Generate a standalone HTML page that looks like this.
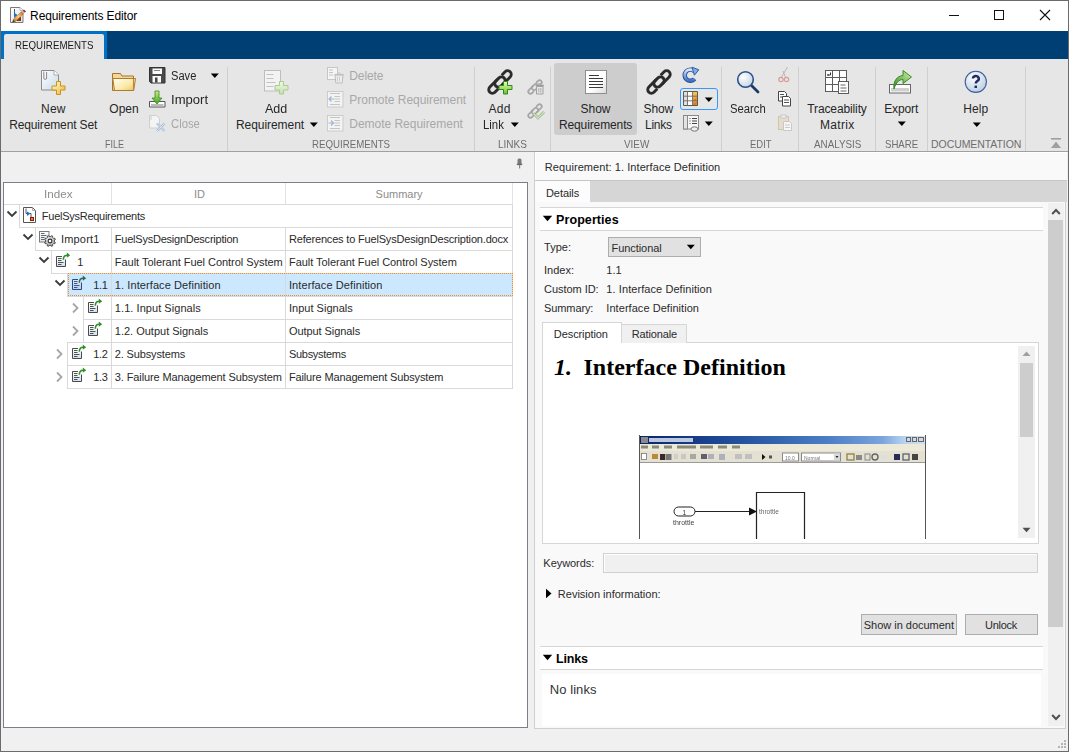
<!DOCTYPE html>
<html><head><meta charset="utf-8">
<style>
html,body{margin:0;padding:0;width:1069px;height:752px;overflow:hidden;background:#f0f0f0;font-family:"Liberation Sans",sans-serif;}
.a{position:absolute;box-sizing:border-box;}
.t{position:absolute;white-space:pre;line-height:1;font-family:"Liberation Sans",sans-serif;}
svg{position:absolute;overflow:visible;}
</style></head><body>
<!-- window frame -->
<div class="a" style="left:0;top:0;width:1069px;height:752px;border:1px solid #6b6b6b;background:#f0f0f0"></div>
<!-- title bar -->
<div class="a" style="left:1px;top:1px;width:1067px;height:30px;background:#fff"></div>
<!-- blue band -->
<div class="a" style="left:1px;top:31px;width:1067px;height:28px;background:#003f73"></div>
<div class="a" style="left:1px;top:31px;width:106px;height:28px;background:#0072c6"></div>
<div class="a" style="left:4px;top:34px;width:100px;height:25px;background:#e6e6e6;border-radius:2px 2px 0 0"></div>
<!-- ribbon -->
<div class="a" style="left:1px;top:59px;width:1067px;height:92px;background:#e6e6e6"></div>
<div class="a" style="left:1px;top:151px;width:1067px;height:1px;background:#a0a0a0"></div>
<!-- group separators -->
<div class="a" style="left:227px;top:67px;width:1px;height:84px;background:#cfcfcf"></div>
<div class="a" style="left:474px;top:67px;width:1px;height:84px;background:#cfcfcf"></div>
<div class="a" style="left:550px;top:67px;width:1px;height:84px;background:#cfcfcf"></div>
<div class="a" style="left:721px;top:67px;width:1px;height:84px;background:#cfcfcf"></div>
<div class="a" style="left:798px;top:67px;width:1px;height:84px;background:#cfcfcf"></div>
<div class="a" style="left:875px;top:67px;width:1px;height:84px;background:#cfcfcf"></div>
<div class="a" style="left:927px;top:67px;width:1px;height:84px;background:#cfcfcf"></div>
<div class="a" style="left:1025px;top:67px;width:1px;height:84px;background:#cfcfcf"></div>
<!-- show requirements highlight -->
<div class="a" style="left:554px;top:63px;width:83px;height:72px;background:#cdcdcd;border-radius:3px"></div>
<!-- view blue outlined button -->
<div class="a" style="left:680px;top:88px;width:38px;height:22px;border:1px solid #3399ff;border-radius:3px"></div>

<!-- title icon -->
<svg style="left:6px;top:4px" width="24" height="22" viewBox="0 0 24 22">
  <defs><linearGradient id="gdoc" x1="0" y1="0" x2="1" y2="1"><stop offset="0" stop-color="#ffffff"/><stop offset="1" stop-color="#d8e4ee"/></linearGradient>
  <linearGradient id="gpen" x1="0" y1="0" x2="1" y2="0"><stop offset="0" stop-color="#c8802a"/><stop offset="0.5" stop-color="#f8d078"/><stop offset="1" stop-color="#c07828"/></linearGradient></defs>
  <path d="M4.5 3.5h9.5l3 3v12h-12.5z" fill="url(#gdoc)" stroke="#7a7a7a" stroke-width="1"/>
  <path d="M14 3.5v3h3" fill="#fff" stroke="#aaa" stroke-width="0.8"/>
  <path d="M8.5 5v4.5" stroke="#555" stroke-width="1"/>
  <path d="M8 8.5l3.5 2.5-3.5 3z" fill="#1f6ad0"/>
  <rect x="10.5" y="13" width="4.5" height="4" fill="#9a2a08"/>
  <g transform="rotate(-43 12.65 12.4)">
    <rect x="6.5" y="10.9" width="11.5" height="3" fill="url(#gpen)" stroke="#a86a22" stroke-width="0.5"/>
    <rect x="18" y="10.9" width="1.8" height="3" fill="#e4a0ae"/>
    <rect x="19.8" y="10.9" width="1.5" height="3" fill="#8a2040"/>
    <path d="M6.5 10.9L3.8 12.4 6.5 13.9z" fill="#444"/>
  </g>
</svg>
<!-- window controls -->
<div class="a" style="left:949px;top:15px;width:10px;height:1px;background:#111"></div>
<div class="a" style="left:994px;top:10px;width:10px;height:10px;border:1px solid #111"></div>
<svg style="left:1039px;top:9px" width="12" height="12" viewBox="0 0 12 12"><path d="M1 1L11 11M11 1L1 11" stroke="#111" stroke-width="1.1"/></svg>

<!-- New Requirement Set -->
<svg style="left:40px;top:69px" width="26" height="26" viewBox="0 0 26 26">
  <defs><linearGradient id="gnd" x1="0" y1="0" x2="1" y2="1"><stop offset="0" stop-color="#ffffff"/><stop offset="1" stop-color="#c9d9e8"/></linearGradient>
  <linearGradient id="gpl" x1="0" y1="0" x2="1" y2="1"><stop offset="0" stop-color="#fffbe0"/><stop offset="1" stop-color="#f2b52a"/></linearGradient></defs>
  <path d="M1.5 1.5h12.5l4.5 4.5v15h-17z" fill="url(#gnd)" stroke="#8a8a8a" stroke-width="1"/>
  <path d="M14 1.5v4.5h4.5" fill="#fff" stroke="#9a9a9a" stroke-width="0.8"/>
  <path d="M3.8 2.5v6.5a1.4 1.4 0 0 0 2.8 0v-6" fill="none" stroke="#888" stroke-width="1"/>
  <path d="M16.5 12.5h4v4.5h4.5v4h-4.5v4.5h-4v-4.5h-4.5v-4h4.5z" fill="url(#gpl)" stroke="#c4961c" stroke-width="1"/>
</svg>
<!-- Open folder -->
<svg style="left:111px;top:72px" width="26" height="20" viewBox="0 0 26 20">
  <defs><linearGradient id="gfo" x1="0" y1="0" x2="1" y2="1"><stop offset="0" stop-color="#fffef6"/><stop offset="0.6" stop-color="#fbe9a8"/><stop offset="1" stop-color="#eec25a"/></linearGradient></defs>
  <path d="M1.5 1.5h8l1.5 2.5h11.5v14.5h-21z" fill="#f2d79a" stroke="#a8742a" stroke-width="1"/>
  <path d="M1.8 6.5h22.7l-1.8 12h-19.2z" fill="url(#gfo)" stroke="#b07a30" stroke-width="1"/>
  <path d="M22.5 7v11" stroke="#c08a3a" stroke-width="1.2"/>
</svg>
<!-- Save floppy -->
<svg style="left:149px;top:67px" width="17" height="17" viewBox="0 0 17 17">
  <path d="M0.5 0.5h15.5v15.5h-14l-1.5-1.5z" fill="#4a4a4a" stroke="#333" stroke-width="1"/>
  <rect x="3.5" y="1.5" width="9.5" height="5.5" fill="#fafafa"/>
  <path d="M5 3.5h6" stroke="#888" stroke-width="1"/>
  <rect x="3.5" y="9" width="8.5" height="6.5" fill="#fafafa"/>
  <rect x="6" y="10.5" width="2.5" height="5" fill="#444"/>
</svg>
<svg style="left:210px;top:73px" width="10" height="6" viewBox="0 0 10 6"><path d="M0.8 0.5h8l-4 4.5z" fill="#000"/></svg>
<!-- Import -->
<svg style="left:149px;top:90px" width="17" height="18" viewBox="0 0 17 18">
  <defs><linearGradient id="gim" x1="0" y1="0" x2="0" y2="1"><stop offset="0" stop-color="#c8f080"/><stop offset="1" stop-color="#3ea020"/></linearGradient></defs>
  <path d="M0.5 11.5h15.5v5.5h-15.5z" fill="#fff" stroke="#555" stroke-width="1"/>
  <rect x="2" y="14" width="12.5" height="2" fill="#bbb"/>
  <path d="M6 1h4v7h3l-5 6-5-6h3z" fill="url(#gim)" stroke="#3b8a1a" stroke-width="0.8"/>
</svg>
<!-- Close disabled -->
<svg style="left:149px;top:115px" width="17" height="17" viewBox="0 0 17 17">
  <path d="M0.5 0.5h7l3 3v9.5h-10z" fill="#f4f4f4" stroke="#cfcfcf" stroke-width="1"/>
  <path d="M2 1v4" stroke="#ccc" stroke-width="1"/>
  <path d="M8 8.5l7.5 7.5M15.5 8.5L8 16" stroke="#a9bdd8" stroke-width="2.4"/>
  <path d="M8 8.5l7.5 7.5M15.5 8.5L8 16" stroke="#dbe5f2" stroke-width="1"/>
</svg>

<!-- Add Requirement (disabled look) -->
<svg style="left:263px;top:69px" width="27" height="26" viewBox="0 0 27 26">
  <rect x="1.5" y="1.5" width="16" height="20.5" fill="#f3f3f3" stroke="#bdbdbd" stroke-width="1"/>
  <path d="M3.5 5.5h7M3.5 9.5h7M3.5 13.5h9M3.5 17.5h7" stroke="#c2c2c2" stroke-width="1"/>
  <defs><linearGradient id="gpg" x1="0" y1="0" x2="0" y2="1"><stop offset="0" stop-color="#eef6e4"/><stop offset="1" stop-color="#c8e0b0"/></linearGradient></defs><path d="M16.5 12.5h4v4h4.5v4.5h-4.5v4h-4v-4h-4.5v-4.5h4.5z" fill="url(#gpg)" stroke="#a9cc8c" stroke-width="1"/>
</svg>
<svg style="left:309px;top:122px" width="10" height="6" viewBox="0 0 10 6"><path d="M0.8 0.5h8l-4 4.5z" fill="#000"/></svg>
<!-- Delete -->
<svg style="left:327px;top:67px" width="17" height="17" viewBox="0 0 17 17">
  <rect x="0.5" y="0.5" width="10" height="12" fill="#f5f5f5" stroke="#c6c6c6"/>
  <path d="M2 3h4M2 5.5h4M2 8h4" stroke="#c4c4c4"/>
  <path d="M8 8h8l-0.8 8h-6.4z" fill="#eee" stroke="#bdbdbd"/>
  <path d="M7.5 7.5h9" stroke="#bdbdbd" stroke-width="1.2"/>
  <path d="M10.5 6h3" stroke="#c6c6c6"/>
  <path d="M10.5 9.5v5M12.5 9.5v5" stroke="#cfcfcf"/>
</svg>
<!-- Promote -->
<svg style="left:327px;top:91px" width="17" height="17" viewBox="0 0 17 17">
  <rect x="0.5" y="0.5" width="15.5" height="15.5" fill="#f3f3f3" stroke="#cbcbcb"/>
  <path d="M3 2.5h10M7.5 5.5h5.5M7.5 8h5.5M7.5 10.5h5.5M3 13.5h10" stroke="#c5c5c5"/>
  <path d="M2 8h5M4.5 5.5L2 8l2.5 2.5" fill="none" stroke="#9fb4d2" stroke-width="1.1"/>
</svg>
<!-- Demote -->
<svg style="left:327px;top:115px" width="17" height="17" viewBox="0 0 17 17">
  <rect x="0.5" y="0.5" width="15.5" height="15.5" fill="#f3f3f3" stroke="#cbcbcb"/>
  <path d="M3 2.5h10M7.5 5.5h5.5M7.5 8h5.5M7.5 10.5h5.5M3 13.5h10" stroke="#c5c5c5"/>
  <path d="M1.5 8h5M4 5.5L6.5 8L4 10.5" fill="none" stroke="#9fb4d2" stroke-width="1.1"/>
</svg>
<!-- Add Link -->
<svg style="left:486px;top:68px" width="28" height="28" viewBox="0 0 28 28">
  <g transform="translate(14 14) rotate(-45)" fill="none" stroke="#2b2b2b" stroke-width="2.9" stroke-linecap="butt">
    <path d="M-6 3.6H-10.8A3.6 3.6 0 0 1 -10.8 -3.6H2.2A3.6 3.6 0 0 1 2.2 3.6H0.2"/>
    <path d="M6 -3.6H10.8A3.6 3.6 0 0 1 10.8 3.6H-2.2A3.6 3.6 0 0 1 -2.2 -3.6H-0.2"/>
  </g>
  <defs><linearGradient id="ggp" x1="0" y1="0" x2="0" y2="1"><stop offset="0" stop-color="#e8ffb0"/><stop offset="1" stop-color="#6cc030"/></linearGradient></defs>
  <path d="M17.5 13.5h4v4h4.5v4h-4.5v4.5h-4v-4.5h-4.5v-4h4.5z" fill="url(#ggp)" stroke="#2e8a1e" stroke-width="1"/>
</svg>
<svg style="left:510px;top:122px" width="10" height="6" viewBox="0 0 10 6"><path d="M0.8 0.5h8l-4 4.5z" fill="#000"/></svg>
<!-- small link delete -->
<svg style="left:527px;top:78px" width="18" height="18" viewBox="0 0 18 18">
  <g transform="translate(8 9) rotate(-45) scale(0.6)" fill="none" stroke="#a4a4a4" stroke-width="2.7">
    <path d="M-6 3.6H-10.8A3.6 3.6 0 0 1 -10.8 -3.6H2.2A3.6 3.6 0 0 1 2.2 3.6H0.2"/>
    <path d="M6 -3.6H10.8A3.6 3.6 0 0 1 10.8 3.6H-2.2A3.6 3.6 0 0 1 -2.2 -3.6H-0.2"/>
  </g>
  <path d="M9.5 8.5h6.5v7.5h-6.5z" fill="#e6e6e6" stroke="#a0a0a0" stroke-width="1"/>
  <path d="M8.5 7.5h8.5" stroke="#a0a0a0" stroke-width="1.4"/>
  <path d="M11 5.8h3.5" stroke="#a8a8a8" stroke-width="1"/>
  <path d="M11.8 10v4.5M13.8 10v4.5" stroke="#b0b0b0" stroke-width="1"/>
</svg>
<!-- small link check -->
<svg style="left:527px;top:102px" width="18" height="18" viewBox="0 0 18 18">
  <g transform="translate(8 9) rotate(-45) scale(0.6)" fill="none" stroke="#a4a4a4" stroke-width="2.7">
    <path d="M-6 3.6H-10.8A3.6 3.6 0 0 1 -10.8 -3.6H2.2A3.6 3.6 0 0 1 2.2 3.6H0.2"/>
    <path d="M6 -3.6H10.8A3.6 3.6 0 0 1 10.8 3.6H-2.2A3.6 3.6 0 0 1 -2.2 -3.6H-0.2"/>
  </g>
  <path d="M6.5 11.5l4.5 4.5 6-6" fill="none" stroke="#9aaa90" stroke-width="2.6"/>
  <path d="M6.5 11.5l4.5 4.5 6-6" fill="none" stroke="#c8ecb0" stroke-width="1.4"/>
</svg>
<!-- Show Requirements doc -->
<svg style="left:584px;top:69px" width="24" height="26" viewBox="0 0 24 26">
  <defs><linearGradient id="gsr" x1="0" y1="0" x2="1" y2="1"><stop offset="0.55" stop-color="#ffffff"/><stop offset="1" stop-color="#dadada"/></linearGradient></defs>
  <rect x="1.5" y="1.5" width="21" height="23" fill="url(#gsr)" stroke="#8e8e8e" stroke-width="1"/>
  <path d="M5 6.5h10M5 9.5h14M5 12.5h14M5 15.5h14M5 18.5h14" stroke="#3a3a3a" stroke-width="1"/>
</svg>
<!-- Show Links chain -->
<svg style="left:645px;top:68px" width="28" height="28" viewBox="0 0 28 28">
  <g transform="translate(14 14) rotate(-45)" fill="none" stroke="#2b2b2b" stroke-width="2.9" stroke-linecap="butt">
    <path d="M-6 3.6H-10.8A3.6 3.6 0 0 1 -10.8 -3.6H2.2A3.6 3.6 0 0 1 2.2 3.6H0.2"/>
    <path d="M6 -3.6H10.8A3.6 3.6 0 0 1 10.8 3.6H-2.2A3.6 3.6 0 0 1 -2.2 -3.6H-0.2"/>
  </g>
</svg>
<!-- Refresh -->
<svg style="left:682px;top:66px" width="18" height="18" viewBox="0 0 18 18">
  <defs><linearGradient id="grf" x1="0" y1="0" x2="0" y2="1"><stop offset="0" stop-color="#d8e8fb"/><stop offset="1" stop-color="#3a72c8"/></linearGradient></defs>
  <path d="M12.2 5.2A5.6 5.6 0 1 0 12.6 12.8" fill="none" stroke="#244f96" stroke-width="4.4"/>
  <path d="M12.2 5.2A5.6 5.6 0 1 0 12.6 12.8" fill="none" stroke="url(#grf)" stroke-width="2.6"/>
  <path d="M10 1.2l6.8 2.6-4.4 5.4z" fill="#7fb0ee" stroke="#244f96" stroke-width="0.9"/>
</svg>
<!-- table icon -->
<svg style="left:683px;top:91px" width="16" height="16" viewBox="0 0 16 16">
  <defs><linearGradient id="gor" x1="0" y1="0" x2="0" y2="1"><stop offset="0" stop-color="#fbc850"/><stop offset="1" stop-color="#e8801a"/></linearGradient></defs>
  <rect x="0.5" y="0.5" width="14" height="14" fill="#fff"/>
  <rect x="1" y="1" width="4" height="13" fill="#e0e0e0"/>
  <rect x="9.5" y="0.5" width="5" height="14" fill="url(#gor)"/>
  <path d="M0.5 0.5h14v14h-14z" fill="none" stroke="#5a5a5a"/>
  <path d="M0.5 5.2h14M0.5 9.8h14M4.5 0.5v14M9.5 0.5v14" stroke="#6a6a6a" stroke-width="0.9"/>
  <path d="M10.8 8l1.2 1 1.6-2M10.8 12.5l1.2 1 1.6-2" fill="none" stroke="#c8601a" stroke-width="0.7"/>
</svg>
<svg style="left:704px;top:97px" width="10" height="6" viewBox="0 0 10 6"><path d="M0.8 0.5h8l-4 4.5z" fill="#000"/></svg>
<!-- third icon -->
<svg style="left:682px;top:114px" width="18" height="18" viewBox="0 0 18 18">
  <rect x="1.5" y="1.5" width="15" height="13.5" fill="#f7f7f7" stroke="#8a8a8a"/>
  <rect x="1.5" y="1.5" width="4" height="13.5" fill="#e4e4e4" stroke="#8a8a8a"/>
  <path d="M7.5 4.5h1M10 4.5h5M7.5 7h1M10 7h5M7.5 9.5h1M10 9.5h5" stroke="#444"/>
  <ellipse cx="12.5" cy="15" rx="3.5" ry="2.2" fill="#eee" stroke="#777"/>
</svg>
<svg style="left:704px;top:121px" width="10" height="6" viewBox="0 0 10 6"><path d="M0.8 0.5h8l-4 4.5z" fill="#000"/></svg>
<!-- Search -->
<svg style="left:735px;top:69px" width="26" height="26" viewBox="0 0 26 26">
  <defs><radialGradient id="gms" cx="0.35" cy="0.35" r="0.7"><stop offset="0" stop-color="#ffffff"/><stop offset="1" stop-color="#c6d6e6"/></radialGradient></defs>
  <path d="M16 16l7 7" stroke="#1b3b66" stroke-width="2.8" stroke-linecap="round"/>
  <circle cx="10.5" cy="10.5" r="7.8" fill="url(#gms)" stroke="#2e5287" stroke-width="1.6"/>
</svg>
<!-- scissors disabled -->
<svg style="left:778px;top:66px" width="12" height="18" viewBox="0 0 12 18">
  <path d="M3.5 11L9.5 1M7.5 11L5 5" stroke="#b9b9b9" stroke-width="1"/>
  <circle cx="3" cy="13.5" r="2.2" fill="none" stroke="#e09898" stroke-width="1.2"/>
  <circle cx="8.5" cy="13.5" r="2.2" fill="none" stroke="#e09898" stroke-width="1.2"/>
</svg>
<!-- copy -->
<svg style="left:778px;top:90px" width="14" height="17" viewBox="0 0 14 17">
  <path d="M0.5 1.5h6l2 2v7.5h-8z" fill="#fff" stroke="#444"/>
  <path d="M2 4.5h4M2 7h4" stroke="#555"/>
  <path d="M4.5 6.5h6l2 2v7.5h-8z" fill="#fff" stroke="#444"/>
  <path d="M6 10h5M6 12.5h5" stroke="#555"/>
</svg>
<!-- paste disabled -->
<svg style="left:777px;top:114px" width="16" height="18" viewBox="0 0 16 18">
  <rect x="1.5" y="2.5" width="10" height="13" fill="#e6dccb" stroke="#cfc4b0"/>
  <rect x="4" y="1" width="5" height="3" fill="#eee" stroke="#c9c9c9"/>
  <path d="M6.5 7.5h6l2 2v7h-8z" fill="#f6f6f6" stroke="#c8c8c8"/>
  <path d="M8 11h5M8 13.5h5" stroke="#cacaca"/>
</svg>
<!-- Traceability -->
<svg style="left:824px;top:69px" width="27" height="27" viewBox="0 0 27 27">
  <rect x="1.5" y="1.5" width="21" height="21" fill="#fff" stroke="#5c5c5c" stroke-width="1"/>
  <path d="M8.5 1.5v21M15.5 1.5v21M1.5 8.5h21M1.5 15.5h21" stroke="#5c5c5c" stroke-width="1"/>
  <path d="M6.5 3.5v2.5h-3M4.5 5l-1 1 1 1" fill="none" stroke="#333" stroke-width="1"/>
  <rect x="14.5" y="12.5" width="10" height="12" fill="#fff" stroke="#5c5c5c"/>
  <path d="M16.5 16h5M16.5 19h6M16.5 22h6" stroke="#666"/>
</svg>
<!-- Export -->
<svg style="left:887px;top:68px" width="26" height="27" viewBox="0 0 26 27">
  <defs><linearGradient id="gex" x1="0" y1="1" x2="1" y2="0"><stop offset="0" stop-color="#2f8a1e"/><stop offset="1" stop-color="#d6f4a8"/></linearGradient></defs>
  <rect x="2.5" y="16.5" width="21" height="8.5" fill="#fff" stroke="#666"/>
  <rect x="4" y="20" width="18" height="3.5" fill="#cfcfcf"/>
  <path d="M7 21C6 13 10 8 16 7.5V2.5l8.5 6.5-8.5 6.5v-4c-4 0-7 3-9 9.5z" fill="url(#gex)" stroke="#3a8a28" stroke-width="1"/>
</svg>
<svg style="left:897px;top:121px" width="10" height="6" viewBox="0 0 10 6"><path d="M0.8 0.5h8l-4 4.5z" fill="#000"/></svg>
<!-- Help -->
<svg style="left:963px;top:69px" width="26" height="26" viewBox="0 0 26 26">
  <defs><radialGradient id="ghp" cx="0.4" cy="0.3" r="0.75"><stop offset="0" stop-color="#ffffff"/><stop offset="1" stop-color="#b9cbe2"/></radialGradient></defs>
  <circle cx="12.8" cy="12.8" r="10.6" fill="url(#ghp)" stroke="#3a5f9c" stroke-width="1.1"/>
  <path d="M10 9.6a2.9 2.7 0 1 1 4.3 2.4c-1 0.7-1.5 1.1-1.5 2.6" fill="none" stroke="#1f3060" stroke-width="2.5"/>
  <rect x="11.5" y="16.6" width="2.5" height="2.4" fill="#1f3060"/>
</svg>
<svg style="left:972px;top:122px" width="10" height="6" viewBox="0 0 10 6"><path d="M0.8 0.5h8l-4 4.5z" fill="#000"/></svg>
<!-- collapse ribbon -->
<svg style="left:1050px;top:137px" width="12" height="12" viewBox="0 0 12 12">
  <rect x="1" y="1" width="10" height="1.6" fill="#a0a0a0"/>
  <path d="M1 11h10l-5-6.5z" fill="#a0a0a0"/>
</svg>

<!-- ===== left tree panel ===== -->
<div class="a" style="left:3px;top:182px;width:525px;height:546px;border:1px solid #7a7f88;background:#fff"></div>

<!-- ===== right panel ===== -->
<div class="a" style="left:534px;top:152px;width:532px;height:577px;border:1px solid #cfcfcf;border-top:none;background:#f9f9f9"></div>

<!-- tree header -->
<div class="a" style="left:4px;top:204px;width:508px;height:1px;background:#dadada"></div>
<div class="a" style="left:111px;top:183px;width:1px;height:21px;background:#e3e3e3"></div>
<div class="a" style="left:285px;top:183px;width:1px;height:21px;background:#e3e3e3"></div>
<div class="a" style="left:512px;top:183px;width:1px;height:21px;background:#e3e3e3"></div>
<!-- rows -->
<div class="a" style="left:19px;top:204px;width:494px;height:24px;border:1px solid #d9d9d9"></div>
<div class="a" style="left:35px;top:227px;width:478px;height:24px;border:1px solid #d9d9d9"></div>
<div class="a" style="left:51px;top:250px;width:462px;height:24px;border:1px solid #d9d9d9"></div>
<div class="a" style="left:67px;top:273px;width:446px;height:24px;border:1px solid #d9d9d9;background:#cce8ff"></div>
<div class="a" style="left:83px;top:296px;width:430px;height:24px;border:1px solid #d9d9d9"></div>
<div class="a" style="left:83px;top:319px;width:430px;height:24px;border:1px solid #d9d9d9"></div>
<div class="a" style="left:67px;top:342px;width:446px;height:24px;border:1px solid #d9d9d9"></div>
<div class="a" style="left:67px;top:365px;width:446px;height:24px;border:1px solid #d9d9d9"></div>
<!-- column lines in rows 1..7 -->
<div class="a" style="left:111px;top:227px;width:1px;height:161px;background:#d9d9d9"></div>
<div class="a" style="left:285px;top:227px;width:1px;height:161px;background:#d9d9d9"></div>
<!-- selection focus dotted -->
<div class="a" style="left:68px;top:273px;width:445px;height:23px;border:1px dotted #f08a24"></div>
<!-- chevrons -->
<svg style="left:6px;top:210px" width="12" height="9" viewBox="0 0 12 9"><path d="M1.5 1.5L6 6l4.5-4.5" fill="none" stroke="#3a3a3a" stroke-width="1.8"/></svg>
<svg style="left:22px;top:233px" width="12" height="9" viewBox="0 0 12 9"><path d="M1.5 1.5L6 6l4.5-4.5" fill="none" stroke="#3a3a3a" stroke-width="1.8"/></svg>
<svg style="left:38px;top:256px" width="12" height="9" viewBox="0 0 12 9"><path d="M1.5 1.5L6 6l4.5-4.5" fill="none" stroke="#3a3a3a" stroke-width="1.8"/></svg>
<svg style="left:54px;top:279px" width="12" height="9" viewBox="0 0 12 9"><path d="M1.5 1.5L6 6l4.5-4.5" fill="none" stroke="#3a3a3a" stroke-width="1.8"/></svg>
<svg style="left:71px;top:302px" width="9" height="12" viewBox="0 0 9 12"><path d="M2 1.5l4.5 4.5L2 10.5" fill="none" stroke="#a6a6a6" stroke-width="1.8"/></svg>
<svg style="left:71px;top:325px" width="9" height="12" viewBox="0 0 9 12"><path d="M2 1.5l4.5 4.5L2 10.5" fill="none" stroke="#a6a6a6" stroke-width="1.8"/></svg>
<svg style="left:55px;top:348px" width="9" height="12" viewBox="0 0 9 12"><path d="M2 1.5l4.5 4.5L2 10.5" fill="none" stroke="#a6a6a6" stroke-width="1.8"/></svg>
<svg style="left:55px;top:371px" width="9" height="12" viewBox="0 0 9 12"><path d="M2 1.5l4.5 4.5L2 10.5" fill="none" stroke="#a6a6a6" stroke-width="1.8"/></svg>
<!-- FuelSys icon -->
<svg style="left:22px;top:206px" width="16" height="18" viewBox="0 0 16 18">
  <path d="M1.5 1.5h9l3 3v12h-12z" fill="#fff" stroke="#555" stroke-width="1"/>
  <path d="M10.5 1.5v3h3" fill="none" stroke="#999" stroke-width="0.8"/>
  <path d="M4 2.5v5h5v4" fill="none" stroke="#444" stroke-width="0.9"/>
  <path d="M5 5.5l3.5 2-3.5 2.5z" fill="#1f6fd0"/>
  <rect x="8" y="11" width="4" height="4" fill="#8a1a08"/>
  <rect x="9" y="12" width="2" height="2" fill="#f07a20"/>
</svg>
<!-- Import icon -->
<svg style="left:38px;top:230px" width="18" height="18" viewBox="0 0 18 18">
  <defs><linearGradient id="gimp" x1="0" y1="0" x2="0" y2="1"><stop offset="0" stop-color="#ffffff"/><stop offset="1" stop-color="#d6e6f4"/></linearGradient>
  <radialGradient id="ggear" cx="0.4" cy="0.35" r="0.7"><stop offset="0" stop-color="#f4f4f4"/><stop offset="1" stop-color="#9a9a9a"/></radialGradient></defs>
  <rect x="1.5" y="1.5" width="9.5" height="10.5" fill="url(#gimp)" stroke="#7a7a7a" stroke-width="1"/>
  <path d="M3 3.5h3.5M3 5.5h5.5M3 7.5h3.5M3 9.5h3" stroke="#6a6a6a" stroke-width="1"/>
  <g transform="translate(12 11)">
    <path d="M4.42 0.84 L5.32 1.41 L4.76 2.76 L3.72 2.53 L2.53 3.72 L2.76 4.76 L1.41 5.32 L0.84 4.42 L-0.84 4.42 L-1.41 5.32 L-2.76 4.76 L-2.53 3.72 L-3.72 2.53 L-4.76 2.76 L-5.32 1.41 L-4.42 0.84 L-4.42 -0.84 L-5.32 -1.41 L-4.76 -2.76 L-3.72 -2.53 L-2.53 -3.72 L-2.76 -4.76 L-1.41 -5.32 L-0.84 -4.42 L0.84 -4.42 L1.41 -5.32 L2.76 -4.76 L2.53 -3.72 L3.72 -2.53 L4.76 -2.76 L5.32 -1.41 L4.42 -0.84Z" fill="url(#ggear)" stroke="#444" stroke-width="1"/>
    <circle cx="0" cy="0" r="1.9" fill="#fff" stroke="#2e2e2e" stroke-width="1.1"/>
  </g>
</svg>
<svg style="left:55px;top:252px" width="16" height="16" viewBox="0 0 16 16">
  <defs><linearGradient id="grq55252" x1="0" y1="0" x2="0" y2="1"><stop offset="0" stop-color="#ffffff"/><stop offset="1" stop-color="#cfe0f0"/></linearGradient></defs>
  <rect x="1.5" y="4.5" width="9" height="10" fill="url(#grq55252)"/>
  <path d="M7 4.5H1.5v10h9V7.5" fill="none" stroke="#4a4a4a" stroke-width="1"/>
  <path d="M3 6.5h3.5M3 8.5h3.5M3 10.5h5.5M3 12.5h3.5" stroke="#505050" stroke-width="1"/>
  <path d="M8.3 7.8C8.3 4.8 9.8 3.2 12.2 3.2" fill="none" stroke="#2f8f2a" stroke-width="1.5"/>
  <path d="M11.8 0.6l3.4 2.6-3.4 2.6z" fill="#2f8f2a"/>
</svg>
<svg style="left:71px;top:275px" width="16" height="16" viewBox="0 0 16 16">
  <defs><linearGradient id="grq71275" x1="0" y1="0" x2="0" y2="1"><stop offset="0" stop-color="#dce8f6"/><stop offset="1" stop-color="#b8d0ec"/></linearGradient></defs>
  <rect x="1.5" y="4.5" width="9" height="10" fill="url(#grq71275)"/>
  <path d="M7 4.5H1.5v10h9V7.5" fill="none" stroke="#2a4a7e" stroke-width="1"/>
  <path d="M3 6.5h3.5M3 8.5h3.5M3 10.5h5.5M3 12.5h3.5" stroke="#3a5a8e" stroke-width="1"/>
  <path d="M8.3 7.8C8.3 4.8 9.8 3.2 12.2 3.2" fill="none" stroke="#2f6a5a" stroke-width="1.5"/>
  <path d="M11.8 0.6l3.4 2.6-3.4 2.6z" fill="#2f6a5a"/>
</svg>
<svg style="left:87px;top:298px" width="16" height="16" viewBox="0 0 16 16">
  <defs><linearGradient id="grq87298" x1="0" y1="0" x2="0" y2="1"><stop offset="0" stop-color="#ffffff"/><stop offset="1" stop-color="#cfe0f0"/></linearGradient></defs>
  <rect x="1.5" y="4.5" width="9" height="10" fill="url(#grq87298)"/>
  <path d="M7 4.5H1.5v10h9V7.5" fill="none" stroke="#4a4a4a" stroke-width="1"/>
  <path d="M3 6.5h3.5M3 8.5h3.5M3 10.5h5.5M3 12.5h3.5" stroke="#505050" stroke-width="1"/>
  <path d="M8.3 7.8C8.3 4.8 9.8 3.2 12.2 3.2" fill="none" stroke="#2f8f2a" stroke-width="1.5"/>
  <path d="M11.8 0.6l3.4 2.6-3.4 2.6z" fill="#2f8f2a"/>
</svg>
<svg style="left:87px;top:321px" width="16" height="16" viewBox="0 0 16 16">
  <defs><linearGradient id="grq87321" x1="0" y1="0" x2="0" y2="1"><stop offset="0" stop-color="#ffffff"/><stop offset="1" stop-color="#cfe0f0"/></linearGradient></defs>
  <rect x="1.5" y="4.5" width="9" height="10" fill="url(#grq87321)"/>
  <path d="M7 4.5H1.5v10h9V7.5" fill="none" stroke="#4a4a4a" stroke-width="1"/>
  <path d="M3 6.5h3.5M3 8.5h3.5M3 10.5h5.5M3 12.5h3.5" stroke="#505050" stroke-width="1"/>
  <path d="M8.3 7.8C8.3 4.8 9.8 3.2 12.2 3.2" fill="none" stroke="#2f8f2a" stroke-width="1.5"/>
  <path d="M11.8 0.6l3.4 2.6-3.4 2.6z" fill="#2f8f2a"/>
</svg>
<svg style="left:71px;top:344px" width="16" height="16" viewBox="0 0 16 16">
  <defs><linearGradient id="grq71344" x1="0" y1="0" x2="0" y2="1"><stop offset="0" stop-color="#ffffff"/><stop offset="1" stop-color="#cfe0f0"/></linearGradient></defs>
  <rect x="1.5" y="4.5" width="9" height="10" fill="url(#grq71344)"/>
  <path d="M7 4.5H1.5v10h9V7.5" fill="none" stroke="#4a4a4a" stroke-width="1"/>
  <path d="M3 6.5h3.5M3 8.5h3.5M3 10.5h5.5M3 12.5h3.5" stroke="#505050" stroke-width="1"/>
  <path d="M8.3 7.8C8.3 4.8 9.8 3.2 12.2 3.2" fill="none" stroke="#2f8f2a" stroke-width="1.5"/>
  <path d="M11.8 0.6l3.4 2.6-3.4 2.6z" fill="#2f8f2a"/>
</svg>
<svg style="left:71px;top:367px" width="16" height="16" viewBox="0 0 16 16">
  <defs><linearGradient id="grq71367" x1="0" y1="0" x2="0" y2="1"><stop offset="0" stop-color="#ffffff"/><stop offset="1" stop-color="#cfe0f0"/></linearGradient></defs>
  <rect x="1.5" y="4.5" width="9" height="10" fill="url(#grq71367)"/>
  <path d="M7 4.5H1.5v10h9V7.5" fill="none" stroke="#4a4a4a" stroke-width="1"/>
  <path d="M3 6.5h3.5M3 8.5h3.5M3 10.5h5.5M3 12.5h3.5" stroke="#505050" stroke-width="1"/>
  <path d="M8.3 7.8C8.3 4.8 9.8 3.2 12.2 3.2" fill="none" stroke="#2f8f2a" stroke-width="1.5"/>
  <path d="M11.8 0.6l3.4 2.6-3.4 2.6z" fill="#2f8f2a"/>
</svg>
<!-- header box -->
<div class="a" style="left:535px;top:152px;width:532px;height:28px;background:#f9f9f9;border-top:1px solid #fff;border-left:1px solid #fff"></div>
<div class="a" style="left:535px;top:180px;width:532px;height:1px;background:#c6c6c6"></div>
<!-- tab strip -->
<div class="a" style="left:535px;top:181px;width:532px;height:21px;background:#d6d6d6"></div>
<div class="a" style="left:535px;top:181px;width:55px;height:21px;background:#fcfcfc"></div>
<!-- Properties header -->
<div class="a" style="left:540px;top:207px;width:503px;height:24px;background:#fff;border-top:1px solid #d6d6d6;border-bottom:1px solid #d6d6d6"></div>
<svg style="left:542px;top:215px" width="11" height="7" viewBox="0 0 11 7"><path d="M0.8 0.8h9.4l-4.7 5.4z" fill="#000"/></svg>
<!-- outer scrollbar -->
<div class="a" style="left:1048px;top:203px;width:16px;height:523px;background:#f0f0f0"></div>
<div class="a" style="left:1048px;top:220px;width:15px;height:407px;background:#cdcdcd"></div>
<svg style="left:1051px;top:207px" width="10" height="9" viewBox="0 0 10 9"><path d="M1.2 7L5 3l3.8 4" fill="none" stroke="#505050" stroke-width="2"/></svg>
<svg style="left:1051px;top:713px" width="10" height="9" viewBox="0 0 10 9"><path d="M1.2 2L5 6l3.8-4" fill="none" stroke="#505050" stroke-width="2"/></svg>
<!-- Type dropdown -->
<div class="a" style="left:608px;top:237px;width:93px;height:20px;background:#e1e1e1;border:1px solid #adadad"></div>
<svg style="left:686px;top:244px" width="10" height="6" viewBox="0 0 10 6"><path d="M0.8 0.8h8l-4 4.4z" fill="#000"/></svg>
<!-- description tabs -->
<div class="a" style="left:542px;top:342px;width:497px;height:202px;background:#fff;border:1px solid #d6d6d6"></div>
<div class="a" style="left:621px;top:324px;width:66px;height:19px;background:#f0f0f0;border:1px solid #d6d6d6;border-bottom:none"></div>
<div class="a" style="left:542px;top:322px;width:80px;height:21px;background:#fff;border:1px solid #d6d6d6;border-bottom:none"></div>
<!-- inner scrollbar -->
<div class="a" style="left:1018px;top:346px;width:17px;height:192px;background:#f0f0f0"></div>
<div class="a" style="left:1020px;top:363px;width:13px;height:74px;background:#cdcdcd"></div>
<svg style="left:1022px;top:351px" width="9" height="6" viewBox="0 0 9 6"><path d="M0.5 5h8l-4-4.5z" fill="#a0a0a0"/></svg>
<svg style="left:1022px;top:527px" width="9" height="6" viewBox="0 0 9 6"><path d="M0.5 0.8h8l-4 4.5z" fill="#505050"/></svg>
<!-- simulink image -->
<div class="a" style="left:639px;top:435px;width:287px;height:104px;background:#fff;border-left:1px solid #555;border-right:1px solid #555;overflow:hidden;filter:blur(0.35px)">
  <div class="a" style="left:0;top:1px;width:285px;height:8px;background:linear-gradient(90deg,#0a246a,#1e4a98 30%,#4a7cc4 65%,#7aa4dc 85%,#b8d4f2 93%,#d0e0f4)"></div>
  <div class="a" style="left:1px;top:2px;width:7px;height:6px;background:#8a8a8a"></div>
  <div class="a" style="left:9px;top:3px;width:44px;height:4px;background:#e8eefa;opacity:0.8"></div>
  <div class="a" style="left:266px;top:2px;width:5px;height:5px;background:#d8d8d8;border:1px solid #666"></div>
  <div class="a" style="left:272px;top:2px;width:5px;height:5px;background:#d8d8d8;border:1px solid #666"></div>
  <div class="a" style="left:278px;top:2px;width:6px;height:5px;background:#d8d8d8;border:1px solid #666"></div>
  <div class="a" style="left:0;top:9px;width:285px;height:7px;background:#ece9d8"></div>
  <div class="a" style="left:0;top:16px;width:285px;height:12px;background:#e4e1d2;border-bottom:1px solid #9a9a9a"></div>
</div>
<svg style="left:639px;top:443px;filter:blur(0.45px)" width="287" height="20" viewBox="0 0 287 20">
  <g fill="#8a8a7a">
    <rect x="2" y="2.5" width="7" height="3"/><rect x="13" y="2.5" width="7" height="3"/><rect x="25" y="2.5" width="8" height="3"/><rect x="38" y="2.5" width="19" height="3"/><rect x="61" y="2.5" width="13" height="3"/><rect x="79" y="2.5" width="9" height="3"/><rect x="93" y="2.5" width="8" height="3"/>
  </g>
  <g>
    <rect x="2.5" y="10.5" width="5" height="6" fill="#fff" stroke="#777" stroke-width="0.8"/>
    <rect x="13" y="11" width="6" height="5" fill="#b88a3a"/><rect x="21" y="11" width="5" height="6" fill="#3a2a2a"/><rect x="26.5" y="11" width="6" height="6" fill="#777"/>
    <rect x="35" y="11" width="4" height="5" fill="#cfcfc8"/><rect x="42" y="11" width="5" height="5" fill="#c8c8c0"/><rect x="51" y="11" width="6" height="5" fill="#a8a8a0"/>
    <rect x="62" y="11" width="6" height="5" fill="#606070"/><rect x="69" y="11" width="6" height="5" fill="#b0b0b8"/><rect x="80" y="11" width="6" height="6" fill="#b0b0b8"/>
    <rect x="96" y="11" width="7" height="5" fill="#c0c0c0"/><rect x="106" y="11" width="7" height="5" fill="#c0c0c0"/>
    <path d="M123 11l3.5 3-3.5 3z" fill="#111"/><rect x="130" y="12.5" width="3" height="3" fill="#555"/>
    <rect x="143.5" y="10" width="16" height="8" fill="#fff" stroke="#8a8a8a" stroke-width="1"/>
    <rect x="162.5" y="10" width="39" height="8" fill="#fff" stroke="#8a8a8a" stroke-width="1"/>
    <rect x="195" y="10.5" width="6" height="7" fill="#d8d8d8"/>
    <path d="M196.5 13h3l-1.5 2z" fill="#222"/>
    <text x="146" y="16.5" font-family="Liberation Sans" font-size="5" fill="#777">10.0</text>
    <text x="165" y="16.5" font-family="Liberation Sans" font-size="5" fill="#777">Normal</text>
    <rect x="208" y="11" width="7" height="6" fill="none" stroke="#8a7a3a" stroke-width="1.2"/><rect x="217" y="12" width="6" height="5" fill="#888"/><rect x="226" y="11" width="5" height="6" fill="none" stroke="#888"/><circle cx="236" cy="14" r="3" fill="none" stroke="#666" stroke-width="1.4"/><rect x="242" y="12" width="5" height="4" fill="#ddd"/>
    <rect x="255" y="11" width="6" height="6" fill="#2a2a5a"/><rect x="264" y="11" width="6" height="6" fill="none" stroke="#556" stroke-width="1.2"/><rect x="273" y="11" width="6" height="6" fill="#444"/>
  </g>
</svg>
<svg style="left:639px;top:463px;filter:blur(0.25px)" width="287" height="76" viewBox="0 0 287 76">
  <rect x="35" y="44" width="21" height="9" rx="4.5" fill="#fff" stroke="#222" stroke-width="1"/>
  <text x="43.5" y="51.5" font-family="Liberation Sans" font-size="6.5" fill="#333">1</text>
  <text x="34" y="61.5" font-family="Liberation Sans" font-size="7" fill="#444">throttle</text>
  <path d="M56 48.5h55" stroke="#222" stroke-width="1"/>
  <path d="M110 44.5l8 4-8 4z" fill="#111"/>
  <path d="M117.5 76V29.5h48V76" fill="none" stroke="#222" stroke-width="1.2"/>
  <text x="120" y="51" font-family="Liberation Sans" font-size="6.5" fill="#666">throttle</text>
</svg>
<!-- keywords field -->
<div class="a" style="left:603px;top:553px;width:435px;height:20px;background:#f0f0f0;border:1px solid #d0d0d0;box-shadow:inset 1px 1px #fff"></div>
<svg style="left:545px;top:588px" width="8" height="11" viewBox="0 0 8 11"><path d="M1 0.8v9.4l5.5-4.7z" fill="#000"/></svg>
<!-- buttons -->
<div class="a" style="left:861px;top:614px;width:96px;height:21px;background:#e1e1e1;border:1px solid #adadad"></div>
<div class="a" style="left:965px;top:614px;width:73px;height:21px;background:#e1e1e1;border:1px solid #adadad"></div>
<!-- Links header -->
<div class="a" style="left:540px;top:646px;width:503px;height:24px;background:#fff;border-top:1px solid #d6d6d6;border-bottom:1px solid #d6d6d6"></div>
<svg style="left:542px;top:654px" width="11" height="7" viewBox="0 0 11 7"><path d="M0.8 0.8h9.4l-4.7 5.4z" fill="#000"/></svg>
<div class="a" style="left:542px;top:674px;width:499px;height:52px;background:#fff"></div>
<!-- pin icon -->
<svg style="left:515px;top:157px" width="9" height="13" viewBox="0 0 9 13"><rect x="2.5" y="1.5" width="4" height="6" rx="1.5" fill="#7a7a7a"/><rect x="1.8" y="6.5" width="5.4" height="1.6" fill="#6a6a6a"/><rect x="4" y="8" width="1.2" height="3.5" fill="#8a8a8a"/></svg>
<!-- resize grip -->
<svg style="left:1056px;top:739px" width="11" height="11" viewBox="0 0 11 11"><g fill="#b5b5b5"><rect x="8" y="1" width="2" height="2"/><rect x="5" y="4" width="2" height="2"/><rect x="8" y="4" width="2" height="2"/><rect x="2" y="7" width="2" height="2"/><rect x="5" y="7" width="2" height="2"/><rect x="8" y="7" width="2" height="2"/></g></svg>

<div class="t" style="left:30.12px;top:10px;font-size:12px;color:#000;letter-spacing:-0.124px">Requirements Editor</div>
<div class="t" style="left:14.98px;top:40px;font-size:10.5px;color:#1a1a1a;transform:scaleX(0.9277);transform-origin:0 0">REQUIREMENTS</div>
<div class="t" style="left:41.02px;top:103px;font-size:12px;color:#262626;letter-spacing:0.222px">New</div>
<div class="t" style="left:9.22px;top:119px;font-size:12px;color:#262626;letter-spacing:-0.142px">Requirement Set</div>
<div class="t" style="left:109.32px;top:103px;font-size:12px;color:#262626">Open</div>
<div class="t" style="left:170.52px;top:70px;font-size:12px;color:#262626;transform:scaleX(0.9281);transform-origin:0 0">Save</div>
<div class="t" style="left:171.02px;top:94px;font-size:12px;color:#262626;transform:scaleX(1.0891);transform-origin:0 0">Import</div>
<div class="t" style="left:171.02px;top:118px;font-size:12px;color:#a8a8a8;transform:scaleX(0.9419);transform-origin:0 0">Close</div>
<div class="t" style="left:104.58px;top:139px;font-size:10.5px;color:#6e6e6e;transform:scaleX(0.8572);transform-origin:0 0">FILE</div>
<div class="t" style="left:264.52px;top:103px;font-size:12px;color:#262626;transform:scaleX(1.0441);transform-origin:0 0">Add</div>
<div class="t" style="left:236.02px;top:119px;font-size:12px;color:#262626;letter-spacing:-0.064px">Requirement</div>
<div class="t" style="left:349.32px;top:70px;font-size:12px;color:#a8a8a8;letter-spacing:-0.105px">Delete</div>
<div class="t" style="left:349.32px;top:94px;font-size:12px;color:#a8a8a8;letter-spacing:-0.029px">Promote Requirement</div>
<div class="t" style="left:349.32px;top:118px;font-size:12px;color:#a8a8a8;letter-spacing:-0.030px">Demote Requirement</div>
<div class="t" style="left:312.08px;top:139px;font-size:10.5px;color:#6e6e6e;transform:scaleX(0.9229);transform-origin:0 0">REQUIREMENTS</div>
<div class="t" style="left:488.52px;top:103px;font-size:12px;color:#262626;letter-spacing:0.300px">Add</div>
<div class="t" style="left:483.32px;top:119px;font-size:12px;color:#262626;transform:scaleX(0.9499);transform-origin:0 0">Link</div>
<div class="t" style="left:498.08px;top:139px;font-size:10.5px;color:#6e6e6e;transform:scaleX(0.9519);transform-origin:0 0">LINKS</div>
<div class="t" style="left:580.52px;top:103px;font-size:12px;color:#262626;letter-spacing:-0.024px">Show</div>
<div class="t" style="left:558.92px;top:119px;font-size:12px;color:#262626;letter-spacing:-0.113px">Requirements</div>
<div class="t" style="left:643.52px;top:103px;font-size:12px;color:#262626;letter-spacing:-0.090px">Show</div>
<div class="t" style="left:645.12px;top:119px;font-size:12px;color:#262626;letter-spacing:-0.289px">Links</div>
<div class="t" style="left:623.58px;top:139px;font-size:10.5px;color:#6e6e6e;transform:scaleX(0.9422);transform-origin:0 0">VIEW</div>
<div class="t" style="left:730.02px;top:103px;font-size:12px;color:#262626;transform:scaleX(0.9387);transform-origin:0 0">Search</div>
<div class="t" style="left:749.58px;top:139px;font-size:10.5px;color:#6e6e6e;transform:scaleX(0.9011);transform-origin:0 0">EDIT</div>
<div class="t" style="left:807.32px;top:103px;font-size:12px;color:#262626;letter-spacing:-0.124px">Traceability</div>
<div class="t" style="left:820.02px;top:119px;font-size:12px;color:#262626;letter-spacing:0.298px">Matrix</div>
<div class="t" style="left:813.58px;top:139px;font-size:10.5px;color:#6e6e6e;transform:scaleX(0.9349);transform-origin:0 0">ANALYSIS</div>
<div class="t" style="left:884.22px;top:103px;font-size:12px;color:#262626;letter-spacing:-0.125px">Export</div>
<div class="t" style="left:884.98px;top:139px;font-size:10.5px;color:#6e6e6e;transform:scaleX(0.9166);transform-origin:0 0">SHARE</div>
<div class="t" style="left:963.32px;top:103px;font-size:12px;color:#262626;letter-spacing:0.024px">Help</div>
<div class="t" style="left:931.08px;top:139px;font-size:10.5px;color:#6e6e6e;letter-spacing:-0.080px">DOCUMENTATION</div>
<div class="t" style="left:43.56px;top:189px;font-size:11px;color:#8c8c8c;transform:scaleX(1.0598);transform-origin:0 0">Index</div>
<div class="t" style="left:194.06px;top:189px;font-size:11px;color:#8c8c8c">ID</div>
<div class="t" style="left:375.56px;top:189px;font-size:11px;color:#8c8c8c">Summary</div>
<div class="t" style="left:41.86px;top:211px;font-size:11px;color:#2a2a2a;letter-spacing:-0.269px">FuelSysRequirements</div>
<div class="t" style="left:60.96px;top:234px;font-size:11px;color:#2a2a2a;letter-spacing:0.181px">Import1</div>
<div class="t" style="left:77.26px;top:257px;font-size:11px;color:#2a2a2a">1</div>
<div class="t" style="left:93.16px;top:280px;font-size:11px;color:#2a2a2a;letter-spacing:-0.308px">1.1</div>
<div class="t" style="left:93.16px;top:349px;font-size:11px;color:#2a2a2a;letter-spacing:-0.308px">1.2</div>
<div class="t" style="left:93.16px;top:372px;font-size:11px;color:#2a2a2a;letter-spacing:-0.308px">1.3</div>
<div class="t" style="left:114.86px;top:234px;font-size:11px;color:#2a2a2a;letter-spacing:-0.236px">FuelSysDesignDescription</div>
<div class="t" style="left:288.96px;top:234px;font-size:11px;color:#2a2a2a;letter-spacing:-0.177px">References to FuelSysDesignDescription.docx</div>
<div class="t" style="left:114.86px;top:257px;font-size:11px;color:#2a2a2a;letter-spacing:-0.039px">Fault Tolerant Fuel Control System</div>
<div class="t" style="left:288.96px;top:257px;font-size:11px;color:#2a2a2a;letter-spacing:-0.039px">Fault Tolerant Fuel Control System</div>
<div class="t" style="left:114.86px;top:280px;font-size:11px;color:#2a2a2a;letter-spacing:0.083px">1. Interface Definition</div>
<div class="t" style="left:288.96px;top:280px;font-size:11px;color:#2a2a2a;letter-spacing:0.093px">Interface Definition</div>
<div class="t" style="left:114.86px;top:303px;font-size:11px;color:#2a2a2a;letter-spacing:0.051px">1.1. Input Signals</div>
<div class="t" style="left:288.96px;top:303px;font-size:11px;color:#2a2a2a;letter-spacing:0.023px">Input Signals</div>
<div class="t" style="left:114.86px;top:326px;font-size:11px;color:#2a2a2a;letter-spacing:-0.010px">1.2. Output Signals</div>
<div class="t" style="left:288.96px;top:326px;font-size:11px;color:#2a2a2a;letter-spacing:-0.067px">Output Signals</div>
<div class="t" style="left:114.86px;top:349px;font-size:11px;color:#2a2a2a;letter-spacing:-0.155px">2. Subsystems</div>
<div class="t" style="left:288.96px;top:349px;font-size:11px;color:#2a2a2a;letter-spacing:-0.294px">Subsystems</div>
<div class="t" style="left:114.86px;top:372px;font-size:11px;color:#2a2a2a;letter-spacing:-0.117px">3. Failure Management Subsystem</div>
<div class="t" style="left:288.96px;top:372px;font-size:11px;color:#2a2a2a;letter-spacing:-0.147px">Failure Management Subsystem</div>
<div class="t" style="left:544.86px;top:162px;font-size:11px;color:#2a2a2a;letter-spacing:0.067px">Requirement: 1. Interface Definition</div>
<div class="t" style="left:545.96px;top:188px;font-size:11px;color:#2a2a2a;letter-spacing:-0.057px">Details</div>
<div class="t" style="left:556.10px;top:214px;font-size:12.5px;color:#000;font-weight:700;letter-spacing:0.073px">Properties</div>
<div class="t" style="left:544.06px;top:242px;font-size:11px;color:#2a2a2a">Type:</div>
<div class="t" style="left:611.56px;top:243px;font-size:11px;color:#2a2a2a;letter-spacing:-0.065px">Functional</div>
<div class="t" style="left:544.06px;top:265px;font-size:11px;color:#2a2a2a">Index:</div>
<div class="t" style="left:606.36px;top:265px;font-size:11px;color:#2a2a2a">1.1</div>
<div class="t" style="left:544.06px;top:284px;font-size:11px;color:#2a2a2a;letter-spacing:-0.048px">Custom ID:</div>
<div class="t" style="left:606.36px;top:284px;font-size:11px;color:#2a2a2a;letter-spacing:0.074px">1. Interface Definition</div>
<div class="t" style="left:544.06px;top:303px;font-size:11px;color:#2a2a2a;letter-spacing:-0.106px">Summary:</div>
<div class="t" style="left:606.36px;top:303px;font-size:11px;color:#2a2a2a;letter-spacing:0.045px">Interface Definition</div>
<div class="t" style="left:553.86px;top:329px;font-size:11px;color:#2a2a2a;letter-spacing:-0.095px">Description</div>
<div class="t" style="left:631.76px;top:329px;font-size:11px;color:#2a2a2a;letter-spacing:-0.138px">Rationale</div>
<div class="t" style="left:554.04px;top:355px;font-size:24px;color:#000;font-weight:700;font-family:'Liberation Serif';font-style:italic">1.</div>
<div class="t" style="left:583.44px;top:355px;font-size:24px;color:#000;font-weight:700;font-family:'Liberation Serif';letter-spacing:0.025px">Interface Definition</div>
<div class="t" style="left:543.36px;top:558px;font-size:11px;color:#2a2a2a;letter-spacing:-0.060px">Keywords:</div>
<div class="t" style="left:557.86px;top:589px;font-size:11px;color:#2a2a2a">Revision information:</div>
<div class="t" style="left:863.76px;top:620px;font-size:11px;color:#2a2a2a;letter-spacing:-0.015px">Show in document</div>
<div class="t" style="left:984.96px;top:620px;font-size:11px;color:#2a2a2a;letter-spacing:-0.249px">Unlock</div>
<div class="t" style="left:556.10px;top:653px;font-size:12.5px;color:#000;font-weight:700;letter-spacing:-0.214px">Links</div>
<div class="t" style="left:549.68px;top:683px;font-size:13px;color:#333;letter-spacing:0.084px">No links</div>
</body></html>
